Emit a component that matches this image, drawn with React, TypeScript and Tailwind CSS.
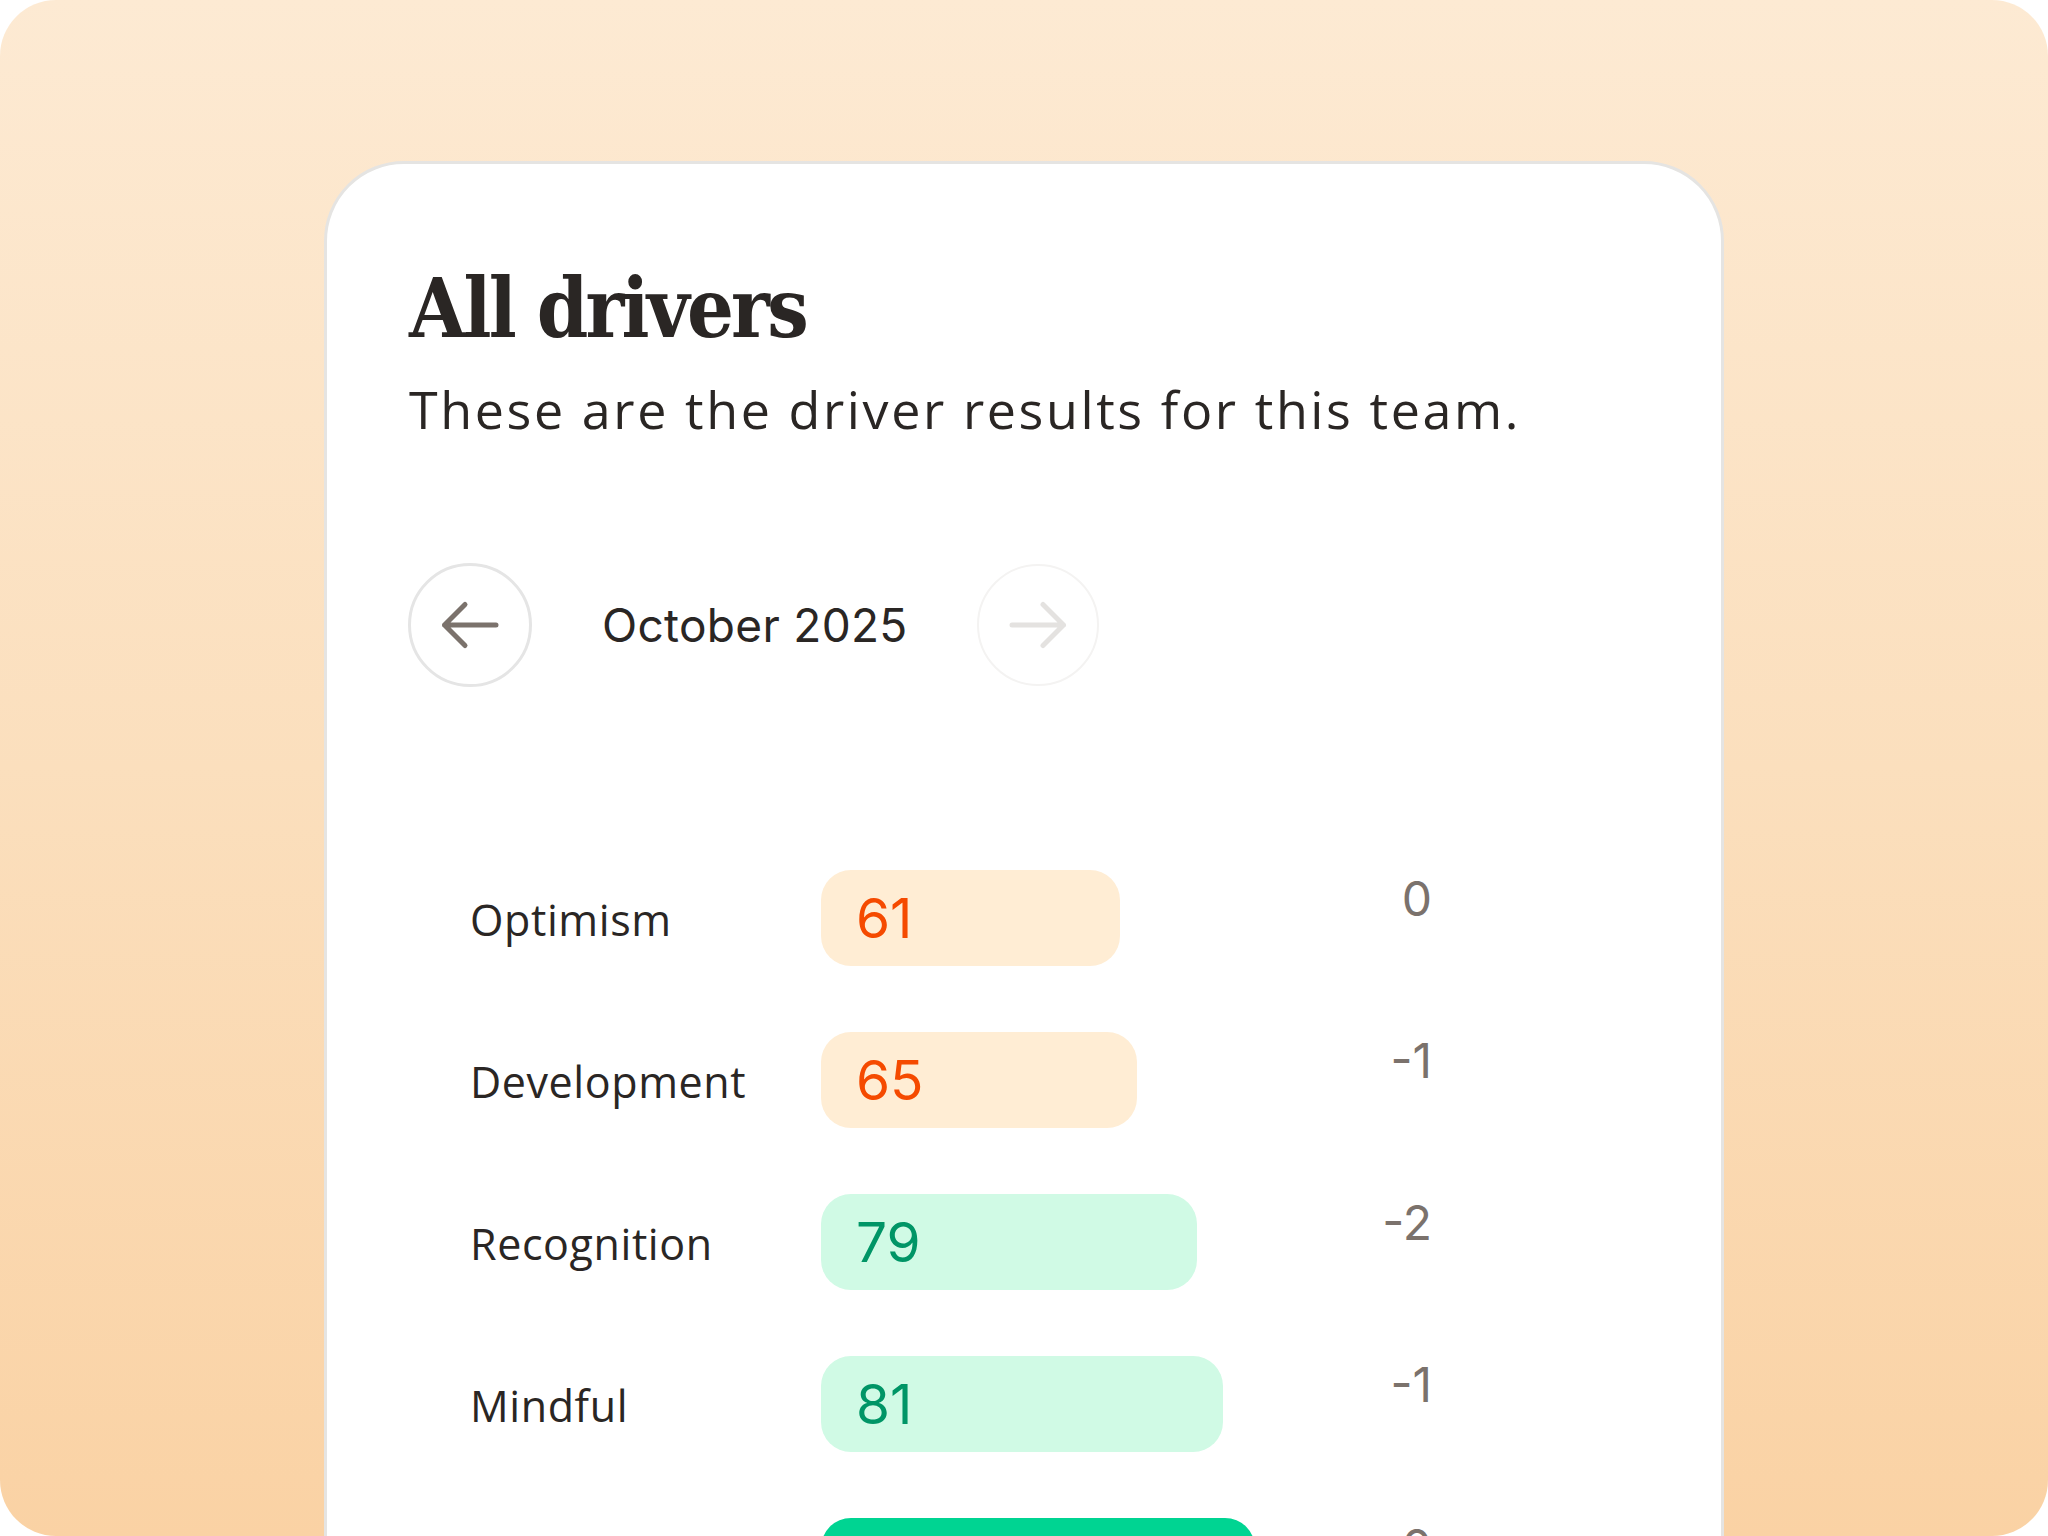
const drivers = [
	{ name: "Optimism", score: 61, width: 299, change: "0", tone: "orange" },
	{ name: "Development", score: 65, width: 316, change: "-1", tone: "orange" },
	{ name: "Recognition", score: 79, width: 376, change: "-2", tone: "green" },
	{ name: "Mindful", score: 81, width: 402, change: "-1", tone: "green" },
	{ name: "Purpose", score: 88, width: 434, change: "0", tone: "strong" },
];

const pillTone: Record<string, string> = {
	orange: "bg-[#ffedd4] text-[#f54a00]",
	green: "bg-[#d0fae5] text-[#009566]",
	strong: "bg-[#00d492] text-white",
};

function Arrow({ dir, color }: { dir: "left" | "right"; color: string }) {
	return (
		<svg width="60" height="50" viewBox="0 0 60 50" fill="none">
			<g transform={dir === "right" ? "translate(60 0) scale(-1 1)" : undefined}>
				<path
					d="M25 4.5 L4.5 25 L25 45.5 M4.5 25 H56"
					stroke={color}
					strokeWidth="5"
					strokeLinecap="round"
					strokeLinejoin="round"
				/>
			</g>
		</svg>
	);
}

export default function App() {
	return (
		<div className="w-[2048px] h-[1536px] bg-white overflow-hidden">
			<div className="h-full rounded-[56px] overflow-hidden bg-linear-to-b from-[#fdead3] via-[#fbdfbd] to-[#fad2a4] pt-[161px] px-[324px]">
				<div className="h-[1500px] bg-white rounded-t-[80px] border-[3px] border-[#e5e4e2] pt-[103px] pl-[82px] pr-[82px]">
					<h1
						className="text-[82px] leading-none font-bold text-[#2a2624] tracking-[-2.8px]"
						style={{ fontFamily: '"DejaVu Serif Condensed", "DejaVu Serif", serif' }}
					>
						All drivers
					</h1>
					<p
						className="mt-[30px] text-[52px] leading-[60px] tracking-[2.6px] text-[#2a2624]"
						style={{ fontFamily: '"Open Sans", sans-serif' }}
					>
						These are the driver results for this team.
					</p>

					<div className="mt-[124px] -ml-[1px] flex items-center">
						<button
							type="button"
							className="w-[124px] h-[124px] rounded-full border-[3px] border-[#e5e5e5] flex items-center justify-center"
						>
							<Arrow dir="left" color="#7b726c" />
						</button>
						<span
							className="ml-[70px] text-[46px] leading-none text-[#2a2624] tracking-[0.3px]"
							style={{ fontFamily: "Inter, sans-serif" }}
						>
							October 2025
						</span>
						<button
							type="button"
							className="ml-[69px] w-[122px] h-[122px] rounded-full border-[2px] border-[#f4f3f2] flex items-center justify-center"
						>
							<Arrow dir="right" color="#e4e2e0" />
						</button>
					</div>

					<div className="mt-[183px] ml-[61px] flex flex-col gap-[66px]">
						{drivers.map((d) => (
							<div key={d.name} className="flex items-start">
								<div
									className="w-[351px] h-[96px] flex items-center pt-[5px] text-[43px] tracking-[0.6px] text-[#2a2624]"
									style={{ fontFamily: '"Open Sans", sans-serif' }}
								>
									{d.name}
								</div>
								<div className="w-[500px]">
									<div
										className={`h-[96px] rounded-[30px] flex items-center pl-[35px] text-[55px] leading-none ${pillTone[d.tone]}`}
										style={{ width: d.width, fontFamily: "Inter, sans-serif" }}
									>
										{d.score}
									</div>
								</div>
								<div
									className="w-[111px] mt-[5px] text-right text-[48px] leading-none text-[#7b726c]"
									style={{ fontFamily: "Inter, sans-serif" }}
								>
									{d.change}
								</div>
							</div>
						))}
					</div>
				</div>
			</div>
		</div>
	);
}
